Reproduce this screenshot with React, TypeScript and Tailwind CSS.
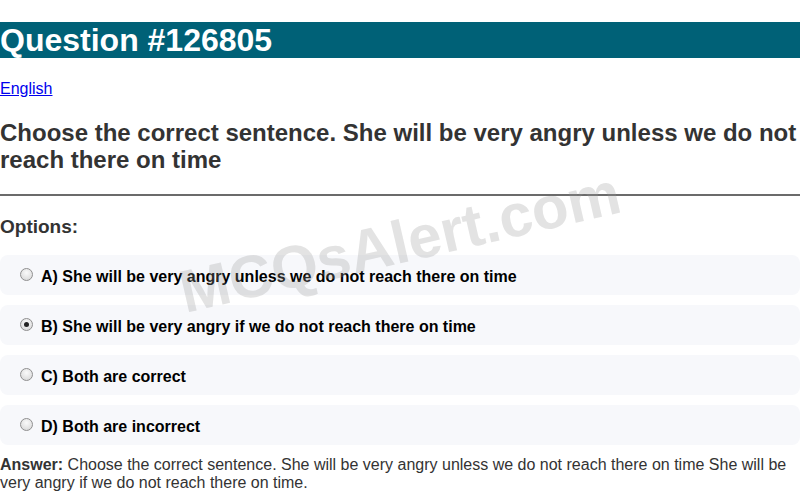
import React from "react";

const options = [
  { label: "A) She will be very angry unless we do not reach there on time", checked: false },
  { label: "B) She will be very angry if we do not reach there on time", checked: true },
  { label: "C) Both are correct", checked: false },
  { label: "D) Both are incorrect", checked: false },
];

function Radio({ checked }: { checked: boolean }) {
  return (
    <span className="w-[13px] h-[13px] rounded-full border border-[#8f8f8f] bg-[radial-gradient(circle_at_50%_35%,#fafafa,#d4d4d4)] flex items-center justify-center shrink-0">
      {checked && <span className="w-[5px] h-[5px] rounded-full bg-[#222]" />}
    </span>
  );
}

export default function App() {
  return (
    <div className="relative w-[800px] h-[492px] overflow-hidden bg-white font-['Liberation_Sans',Arial,sans-serif]">
      <div className="pt-[22px]">
        <h1 className="bg-[#006177] text-white font-bold text-[32px] leading-[36px] h-[36px] m-0">
          Question #126805
        </h1>
        <div className="mt-[22px] text-[16px] leading-[18px]">
          <a href="#" className="text-[#0000ee] underline">English</a>
        </div>
        <h2 className="mt-[21px] text-[24px] leading-[27px] font-bold text-[#333]">
          Choose the correct sentence. She will be very angry unless we do not reach there on time
        </h2>
        <hr className="mt-[21px] border-0 h-[2px] bg-[#6b6b6b]" />
        <div className="mt-[20px] text-[19px] leading-[22px] font-bold text-[#333]">Options:</div>
        <div className="mt-[17px] flex flex-col gap-[10px]">
          {options.map((o) => (
            <div key={o.label} className="h-[40px] rounded-[8px] bg-[#f7f8fb] flex items-center pl-[20px] gap-[8px]">
              <span className="mt-[-1px]">
                <Radio checked={o.checked} />
              </span>
              <span className="text-[16px] font-bold text-black leading-[18px] mt-[3px]">{o.label}</span>
            </div>
          ))}
        </div>
        <p className="mt-[11px] text-[16px] leading-[18px] text-[#333]">
          <b>Answer:</b> Choose the correct sentence. She will be very angry unless we do not reach there on time She will be very angry if we do not reach there on time.
        </p>
      </div>
      <div className="pointer-events-none absolute left-[400px] top-[243px] -translate-x-1/2 -translate-y-1/2 -rotate-[13deg] whitespace-nowrap text-[60px] leading-none font-bold text-[rgba(150,150,150,0.27)]">
        MCQsAlert.com
      </div>
    </div>
  );
}
